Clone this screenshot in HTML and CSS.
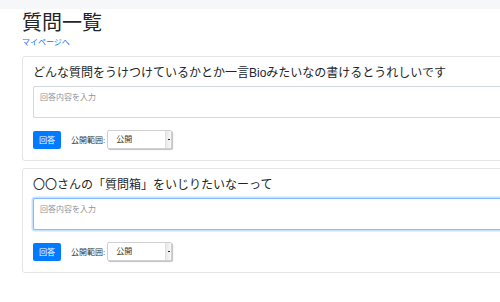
FILE: index.html
```html
<!DOCTYPE html>
<html lang="ja">
<head>
<meta charset="utf-8">
<title>質問一覧</title>
<link rel="stylesheet" href="styles.css">
</head>
<body>
<div class="topbar"></div>
<main class="container">
  <h1 class="page-title">質問一覧</h1>
  <a class="mypage-link" href="#">マイページへ</a>

  <section class="card">
    <h5 class="card-title">どんな質問をうけつけているかとか一言Bioみたいなの書けるとうれしいです</h5>
    <textarea class="answer" placeholder="回答内容を入力"></textarea>
    <div class="form-row">
      <button class="btn-primary" type="button">回答</button>
      <label class="scope-label">公開範囲:</label>
      <div class="select"><span class="select-value">公開</span><span class="select-arrow"><span class="dash"></span></span></div>
    </div>
  </section>

  <section class="card">
    <h5 class="card-title">〇〇さんの「質問箱」をいじりたいなーって</h5>
    <textarea class="answer focused" placeholder="回答内容を入力" autofocus></textarea>
    <div class="form-row">
      <button class="btn-primary" type="button">回答</button>
      <label class="scope-label">公開範囲:</label>
      <div class="select"><span class="select-value">公開</span><span class="select-arrow"><span class="dash"></span></span></div>
    </div>
  </section>
</main>
</body>
</html>
```

FILE: styles.css
```css
html {
  overflow: hidden;
}
body {
  margin: 0;
  background: #fff;
  color: #212529;
  font-family: "Liberation Sans", "Noto Sans CJK JP", sans-serif;
}
.topbar {
  height: 9px;
  background: #f6f7f8;
}
.container {
  width: 540px;
  padding-left: 22px;
}
.page-title {
  margin: 0;
  padding-top: 1px;
  font-size: 20px;
  font-weight: 400;
  line-height: 26px;
  color: #212529;
}
.mypage-link {
  display: block;
  margin-top: 2px;
  font-size: 8px;
  line-height: 10px;
  color: #007bff;
  text-decoration: none;
}
.card {
  margin-top: 8px;
  border: 1px solid #e3e5e7;
  border-radius: 3px;
  padding: 9px 10px 11px;
}
.card + .card {
  margin-top: 7px;
}
.card-title {
  margin: 0;
  font-size: 12px;
  font-weight: 400;
  line-height: 15px;
  color: #212529;
}
.answer {
  display: block;
  box-sizing: border-box;
  width: 100%;
  height: 32px;
  margin-top: 5px;
  padding: 5px 6px;
  border: 1px solid #d4d9de;
  border-radius: 2px;
  font-family: "Liberation Sans", "Noto Sans CJK JP", sans-serif;
  font-size: 8px;
  line-height: 11px;
  resize: none;
  outline: none;
}
.answer::placeholder {
  color: #8e9499;
}
.answer.focused {
  border-color: #80bdff;
  box-shadow: 0 0 0 1.5px rgba(0, 123, 255, 0.22);
}
.form-row {
  display: flex;
  align-items: center;
  margin-top: 12px;
}
.btn-primary {
  width: 28px;
  height: 18px;
  padding: 0;
  border: none;
  border-radius: 2px;
  background: #007bff;
  color: #fff;
  font-family: "Liberation Sans", "Noto Sans CJK JP", sans-serif;
  font-size: 8px;
}
.scope-label {
  margin-left: 10px;
  margin-right: 2px;
  font-size: 8px;
  color: #333;
}
.select {
  display: flex;
  box-sizing: border-box;
  width: 65px;
  height: 19px;
  border: 1px solid #d0d0d0;
  border-radius: 2px;
  background: #fff;
  box-shadow: 1px 1px 1px rgba(0, 0, 0, 0.25);
}
.select-value {
  flex: 1;
  padding-left: 8px;
  font-size: 8px;
  line-height: 17px;
  color: #333;
}
.select-arrow {
  display: flex;
  align-items: center;
  justify-content: center;
  width: 5px;
  background: linear-gradient(to right, #e9e9e9, #f7f7f7);
  border-left: 1px solid #e0e0e0;
}
.dash {
  width: 2px;
  height: 1px;
  background: #222;
}
```
